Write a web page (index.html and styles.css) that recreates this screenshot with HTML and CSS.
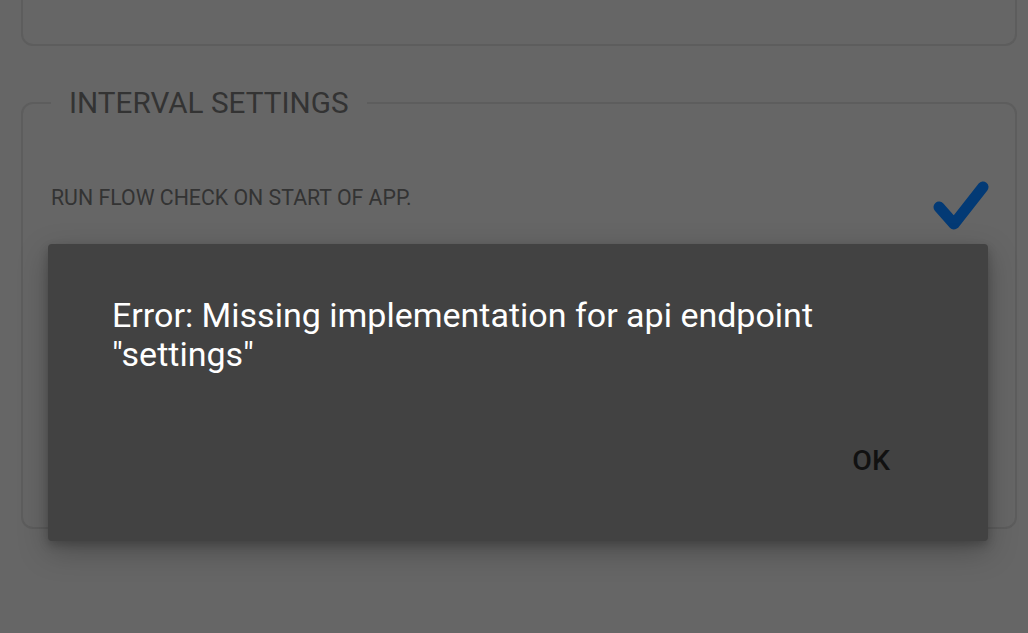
FILE: index.html
```html
<!DOCTYPE html>
<html>
<head>
<meta charset="utf-8">
<link rel="stylesheet" href="styles.css">
</head>
<body>
<div class="page">
  <fieldset class="box box-top"></fieldset>
  <fieldset class="box box-interval">
    <legend class="legend">INTERVAL SETTINGS</legend>
    <div class="row">
      <span class="row-label">RUN FLOW CHECK ON START OF APP.</span>
      <svg class="check" width="58" height="56" viewBox="0 0 58 56">
        <path d="M8 30 L23 47 L52 10" fill="none" stroke="#033a75" stroke-width="11" stroke-linecap="round" stroke-linejoin="round"/>
      </svg>
    </div>
  </fieldset>
</div>
<div class="dialog">
  <p class="dialog-msg">Error: Missing implementation for api endpoint "settings"</p>
  <div class="dialog-actions"><button class="dialog-btn">OK</button></div>
</div>
</body>
</html>
```
FILE: styles.css
```css
html, body {
  margin: 0;
  padding: 0;
  width: 1028px;
  height: 633px;
  overflow: hidden;
  background: #666666;
  font-family: Roboto, "Liberation Sans", sans-serif;
}
.page {
  padding: 0 11px 0 21px;
  display: flex;
  flex-direction: column;
}
.box {
  margin: 0;
  border: 2px solid #5d5d5d;
  border-radius: 12px;
  padding: 0;
}
.box-top {
  height: 70px;
  margin-top: -26px;
  border-top: none;
}
.box-interval {
  margin-top: 41px;
  height: 438px;
  padding: 0 28px 0 28px;
}
.legend {
  margin-left: 0;
  padding: 0 18px 0 18px;
  font-size: 29.7px;
  color: #333333;
  line-height: 32px;
}
.row {
  display: flex;
  justify-content: space-between;
  align-items: flex-start;
  margin-top: 67px;
}
.row-label {
  font-size: 21.3px;
  color: #333333;
  line-height: 24px;
}
.check {
  margin-top: -9px;
  margin-right: -2px;
}
.dialog {
  position: absolute;
  left: 48px;
  top: 244px;
  width: 940px;
  height: 297px;
  background: #424242;
  border-radius: 4px;
  box-shadow: 0 10px 30px rgba(0,0,0,0.25), 0 4px 10px rgba(0,0,0,0.2);
  box-sizing: border-box;
  padding: 52px 64px 0 64px;
  display: flex;
  flex-direction: column;
}
.dialog-msg {
  margin: 0;
  color: #ffffff;
  font-size: 34px;
  line-height: 39px;
  width: 740px;
}
.dialog-actions {
  display: flex;
  justify-content: flex-end;
  margin-top: 70px;
  padding-right: 34px;
}
.dialog-btn {
  background: none;
  border: none;
  padding: 0;
  font-family: Roboto, "Liberation Sans", sans-serif;
  font-size: 28.5px;
  font-weight: 500;
  color: #111111;
}
```
